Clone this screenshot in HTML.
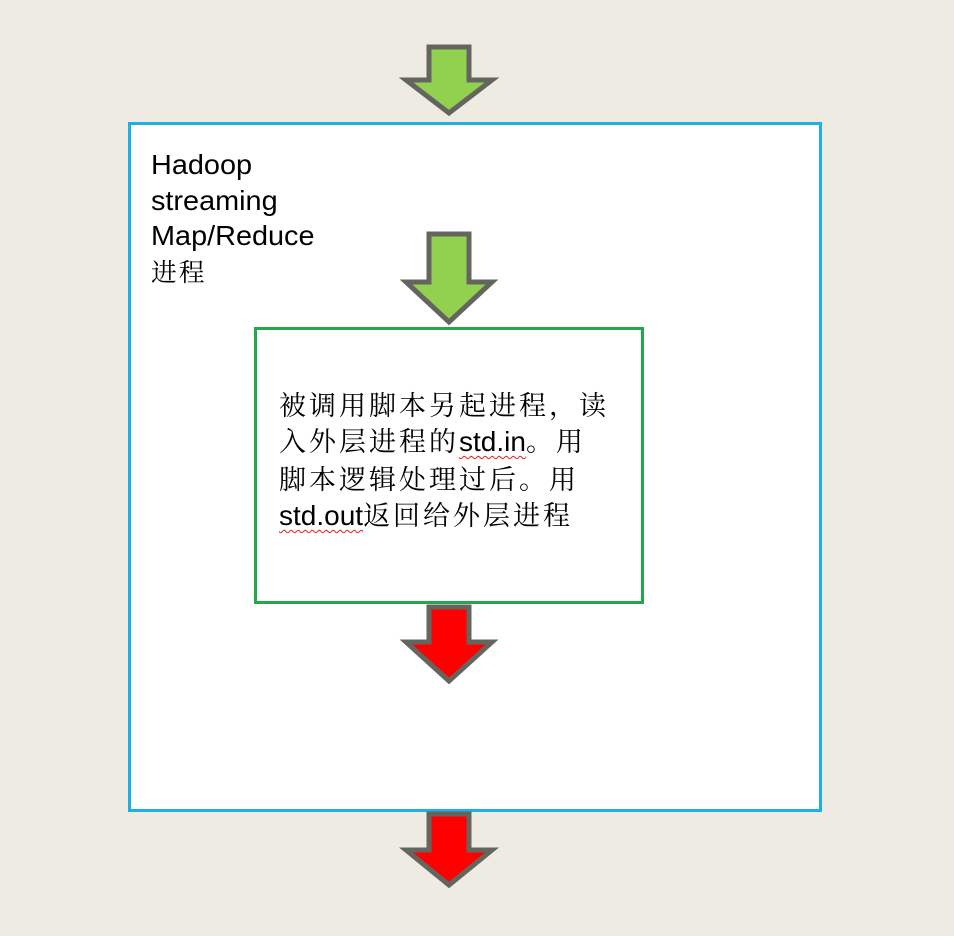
<!DOCTYPE html>
<html><head><meta charset="utf-8"><style>
body{margin:0;width:954px;height:936px;background:#eeebe3;position:relative;overflow:hidden}
.box{position:absolute;box-sizing:border-box;background:#fff}
svg{position:absolute;left:0;top:0}
.t{position:absolute;font-family:"Liberation Sans","Noto Serif CJK SC",sans-serif;color:#000}
.u{text-decoration:underline wavy #e02020;text-decoration-thickness:1px;text-underline-offset:4px}
</style></head><body>
<div class="box" style="left:128px;top:122px;width:694px;height:690px;border:3px solid #1faee6"></div>
<div class="box" style="left:254px;top:327px;width:390px;height:277px;border:3px solid #22a84a"></div>
<svg width="954" height="936">
<g stroke="#656560" stroke-width="5" stroke-linejoin="miter">
<polygon points="429,47 469,47 469,80 492,80 449,113 406,80 429,80" fill="#92d050"/>
<polygon points="429,234 469,234 469,282 492,282 449,322 406,282 429,282" fill="#92d050"/>
<polygon points="429,607 469,607 469,642 492,642 449,681 406,642 429,642" fill="#ff0000"/>
<polygon points="429,814 469,814 469,850 492,850 449,885 406,850 429,850" fill="#ff0000"/>
</g>
</svg>
<div class="t" style="left:151px;top:147px;font-size:28px;line-height:35.5px;transform:scaleX(1.03);transform-origin:left">Hadoop<br>streaming<br>Map/Reduce<br><span style="font-family:'Noto Serif CJK SC',serif;font-size:25px;letter-spacing:2px">进程</span></div>
<div class="t" style="left:279px;top:386px;font-size:27px;line-height:36px;letter-spacing:3px;font-family:'Noto Serif CJK SC','Liberation Sans',serif;white-space:nowrap">被调用脚本另起进程，读<br>入外层进程的<span class="u" style="font-family:'Liberation Sans',sans-serif;letter-spacing:0;font-size:28px">std.in</span>。用<br>脚本逻辑处理过后。用<br><span class="u" style="font-family:'Liberation Sans',sans-serif;letter-spacing:0;font-size:28px">std.out</span>返回给外层进程</div>
</body></html>
